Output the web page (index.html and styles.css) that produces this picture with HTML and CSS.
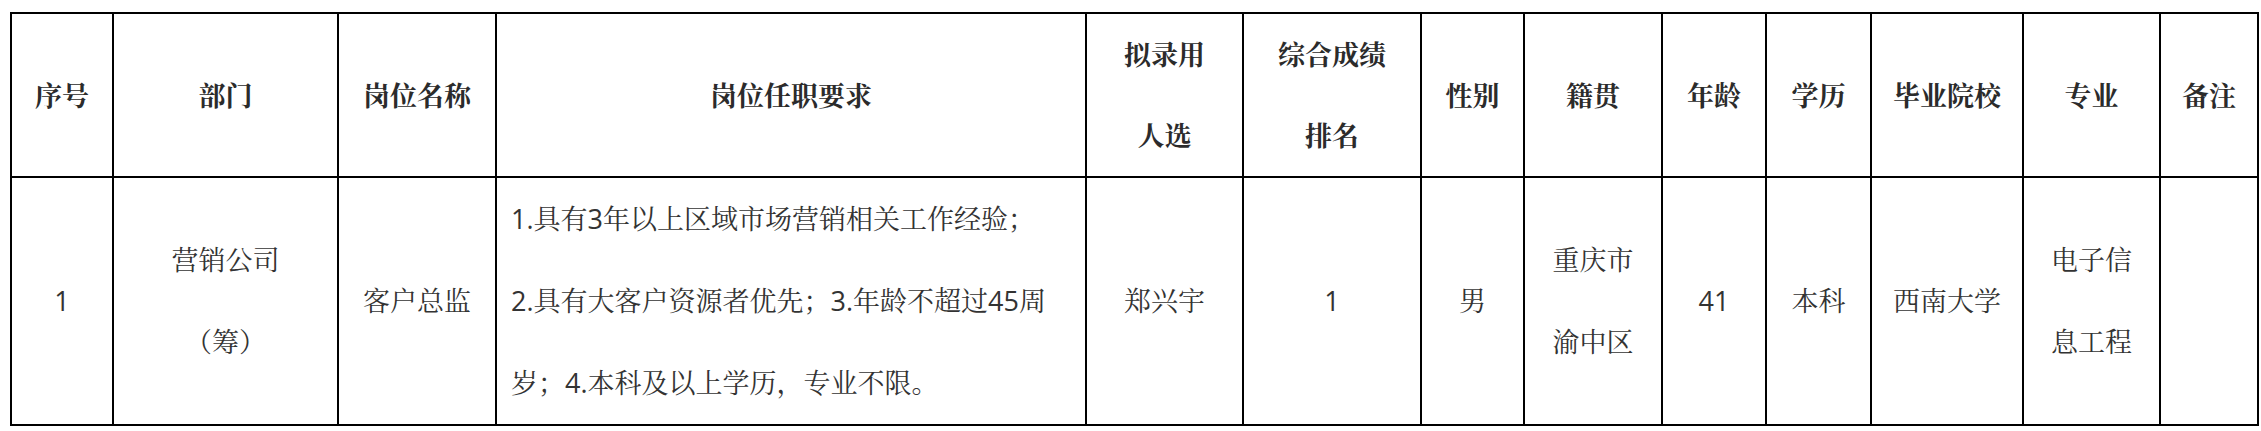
FILE: index.html
```html
<!DOCTYPE html>
<html lang="zh-CN">
<head>
<meta charset="utf-8">
<title>拟录用人选公示</title>
<link rel="stylesheet" href="styles.css">
</head>
<body>
<table class="roster">
  <thead>
    <tr>
      <th class="c-no">序号</th>
      <th class="c-dept">部门</th>
      <th class="c-post">岗位名称</th>
      <th class="c-req">岗位任职要求</th>
      <th class="c-name">拟录用<br>人选</th>
      <th class="c-rank">综合成绩<br>排名</th>
      <th class="c-sex">性别</th>
      <th class="c-origin">籍贯</th>
      <th class="c-age">年龄</th>
      <th class="c-edu">学历</th>
      <th class="c-school">毕业院校</th>
      <th class="c-major">专业</th>
      <th class="c-note">备注</th>
    </tr>
  </thead>
  <tbody>
    <tr>
      <td>1</td>
      <td>营销公司<br>（筹）</td>
      <td>客户总监</td>
      <td class="req">1.具有3年以上区域市场营销相关工作经验；<br>2.具有大客户资源者优先；3.年龄不超过45周<br>岁；4.本科及以上学历，专业不限。</td>
      <td>郑兴宇</td>
      <td>1</td>
      <td>男</td>
      <td>重庆市<br>渝中区</td>
      <td>41</td>
      <td>本科</td>
      <td>西南大学</td>
      <td>电子信<br>息工程</td>
      <td></td>
    </tr>
  </tbody>
</table>
</body>
</html>
```

FILE: styles.css
```css
html, body {
  margin: 0;
  padding: 0;
  background: #ffffff;
}

body {
  font-family: "Open Sans", "Noto Serif CJK SC", "Noto Sans CJK SC", sans-serif;
  font-size: 27px;
  color: #333333;
}

.roster {
  margin: 12px 0 0 10px;
  width: 2249px;
  table-layout: fixed;
  border-collapse: separate;
  border-spacing: 0;
  border-top: 2px solid #000000;
  border-left: 2px solid #000000;
}

.roster th,
.roster td {
  box-sizing: border-box;
  padding: 0;
  border-right: 2px solid #000000;
  border-bottom: 2px solid #000000;
  text-align: center;
  vertical-align: middle;
  white-space: nowrap;
}

.roster th {
  font-weight: bold;
  line-height: 81px;
  color: #2b2b2b;
}

.roster td {
  font-weight: normal;
  line-height: 82px;
}

.roster td.req {
  text-align: left;
  padding: 0 14px;
}

.c-no { width: 102px; }
.c-dept { width: 225px; }
.c-post { width: 158px; }
.c-req { width: 590px; }
.c-name { width: 157px; }
.c-rank { width: 178px; }
.c-sex { width: 103px; }
.c-origin { width: 138px; }
.c-age { width: 104px; }
.c-edu { width: 105px; }
.c-school { width: 152px; }
.c-major { width: 137px; }
.c-note { width: 98px; }
```
